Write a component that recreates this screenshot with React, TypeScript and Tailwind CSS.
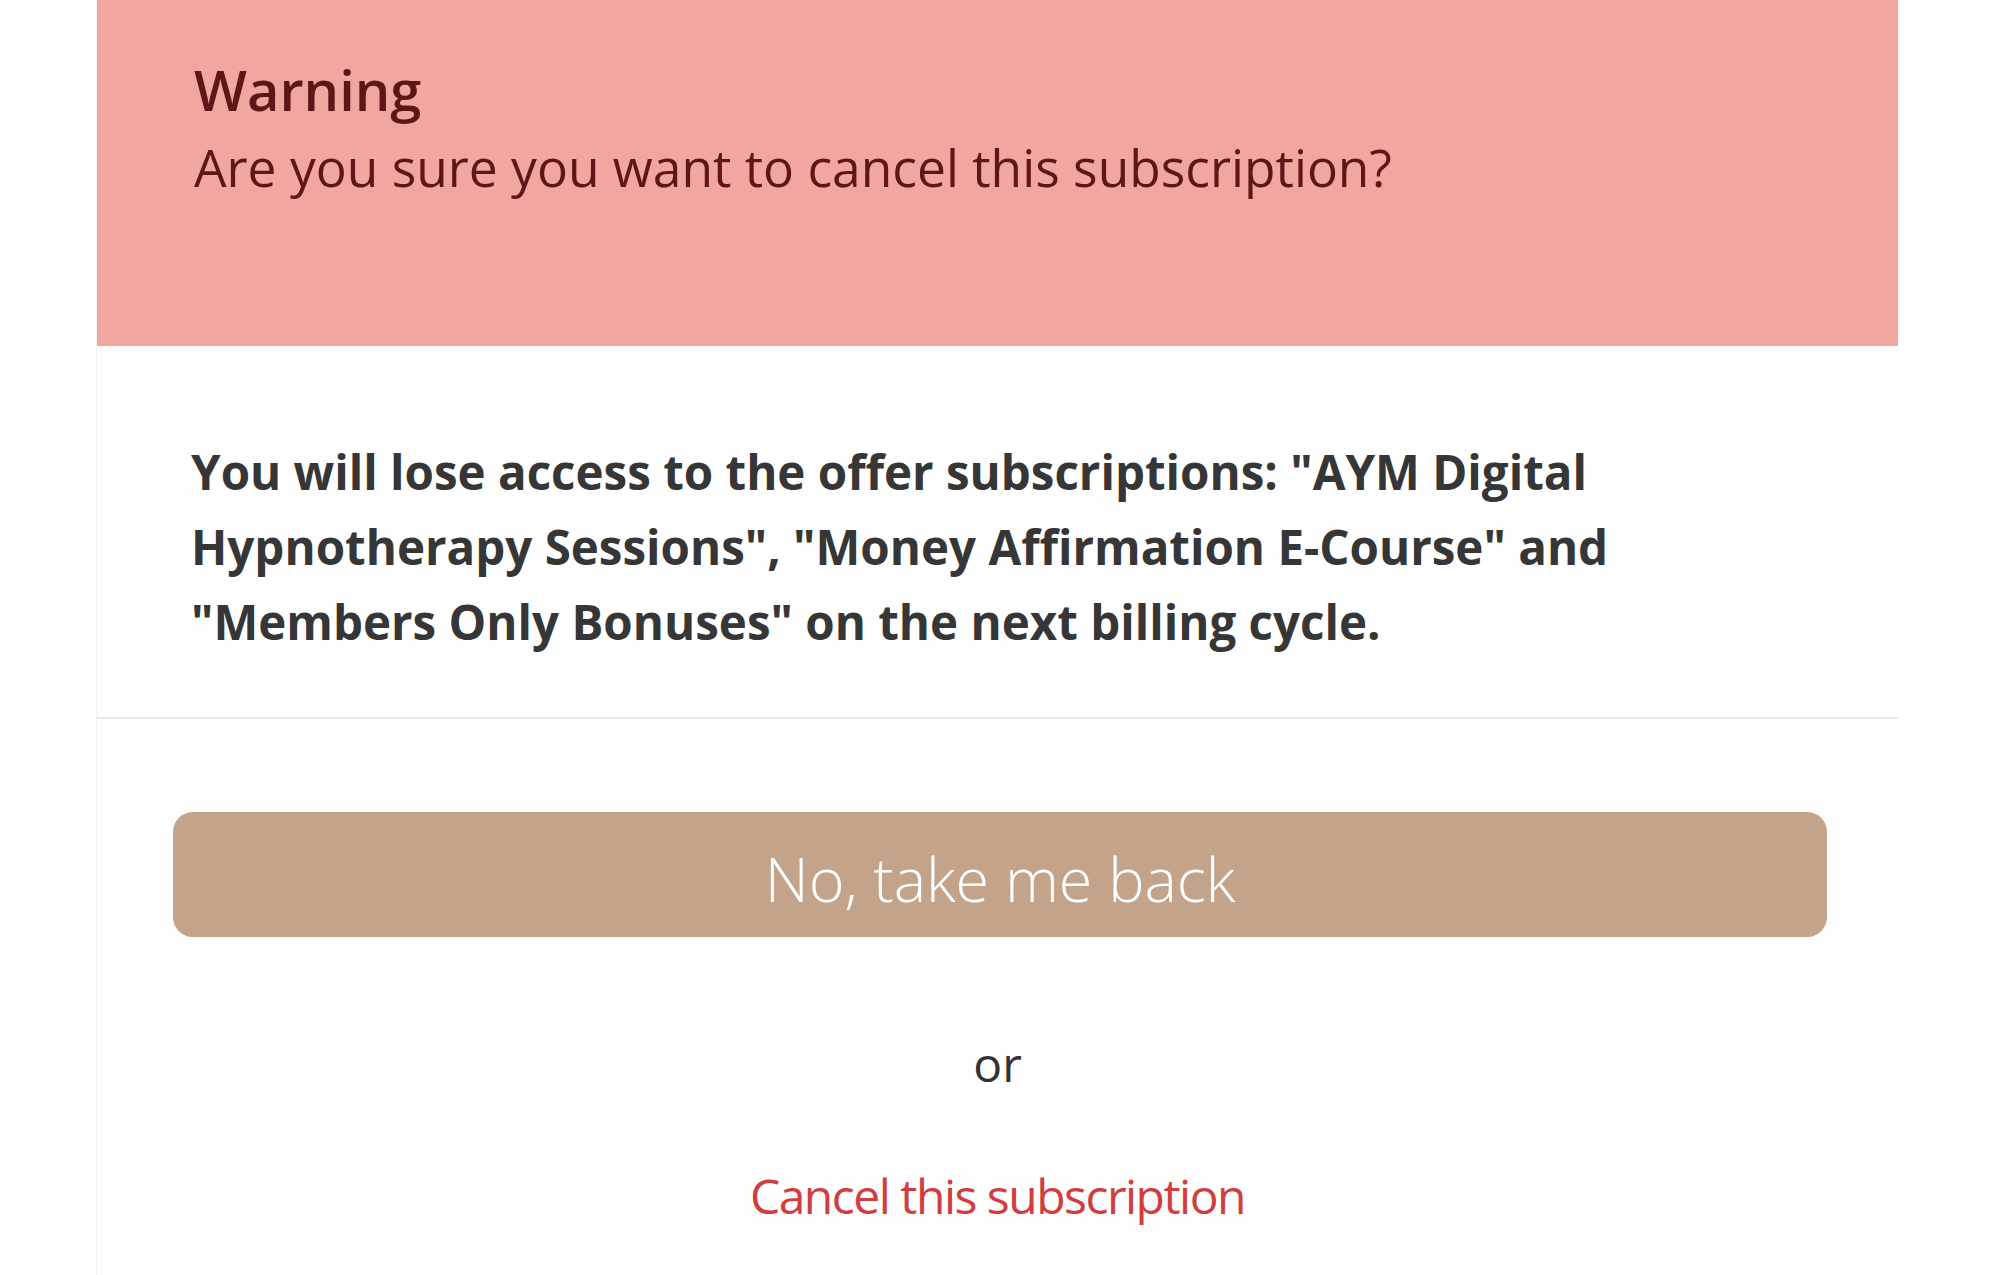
const sans = 'font-["Open_Sans","Noto_Sans",sans-serif]'

export default function App() {
  return (
    <div className={`min-h-screen w-full bg-white ${sans}`}>
      <div className="ml-[96px] w-[1802px] min-h-[1275px] border-l border-[#f3f3f3] bg-[#fefefe]">
        <div className="h-[346px] bg-[#f0a7a0] pl-[97px] pt-[53px] text-[#5e1616]">
          <h1 className="text-[56px] font-semibold leading-[72px]">Warning</h1>
          <p className="mt-[5px] text-[51.5px] leading-[75px]">Are you sure you want to cancel this subscription?</p>
        </div>

        <div className="border-b-2 border-[#e6e9ef] pl-[94px] pr-[96px] pt-[88px] pb-[58px]">
          <p className="text-[47.5px] font-bold leading-[75px] text-[#363636]">
            You will lose access to the offer subscriptions: "AYM Digital Hypnotherapy Sessions", "Money Affirmation
            E-Course" and "Members Only Bonuses" on the next billing cycle.
          </p>
        </div>

        <div className="flex flex-col items-center pt-[93px]">
          <button className="ml-[5px] flex h-[125px] w-[1654px] items-center justify-center rounded-[20px] bg-[#c4a38b] pt-[8px] text-[61px] font-light leading-none text-white">
            No, take me back
          </button>
          <span className="mt-[103px] text-[48px] leading-none text-[#2f3236]">or</span>
          <a className="mt-[84px] text-[48px] leading-none tracking-[-1.5px] text-[#d23c3c]">Cancel this subscription</a>
        </div>
      </div>
    </div>
  )
}
